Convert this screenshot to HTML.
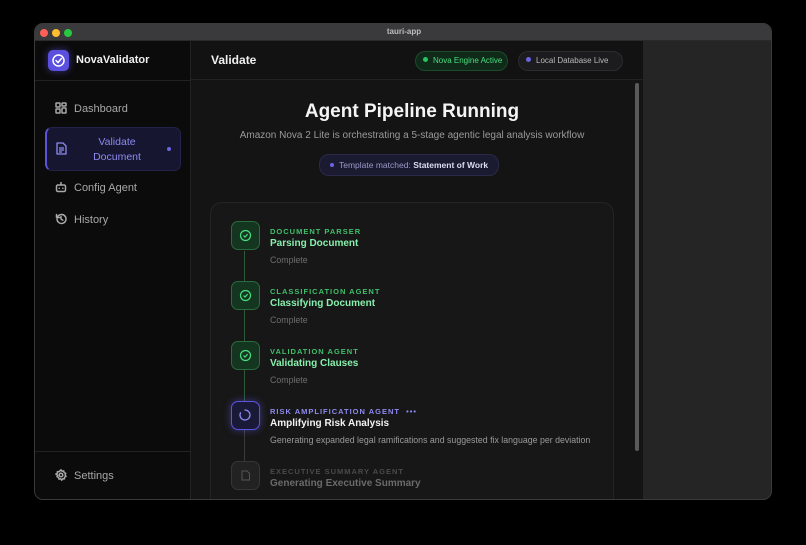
<!DOCTYPE html>
<html><head><meta charset="utf-8"><style>
*{margin:0;padding:0;box-sizing:border-box}
body{width:806px;height:545px;background:#000;font-family:"Liberation Sans",sans-serif;position:relative;overflow:hidden}
.a{position:absolute}
.win{left:34px;top:23px;width:738px;height:477px;border-radius:9px;overflow:hidden;background:#252525;border:1px solid #3a3a3a}
.tb{left:0;top:0;width:738px;height:17px;background:#3a3a3c;border-bottom:1px solid #2a2a2a}
.dot{width:8px;height:8px;border-radius:50%;top:5px}
.side{left:0;top:17px;width:156px;height:460px;background:#0b0b0b;border-right:1px solid #222}
.main{left:156px;top:17px;width:452px;height:460px;background:#141414}
.nav{left:21px;font-size:11px;color:#a8a8a8}
.ic{stroke:#a8a8a8;fill:none;stroke-width:1.5;stroke-linecap:round;stroke-linejoin:round}
.pill{height:20px;border-radius:10px;font-size:8px;line-height:18px;padding:0 6px 0 7px;white-space:nowrap}
.st{left:0}
.box{width:29px;height:29px;border-radius:7px}
.lab{font-size:7.5px;font-weight:bold;letter-spacing:1px}
.tt{font-size:10px;font-weight:bold}
.sub{font-size:8.8px;color:#6e6e6e}
</style></head><body>
<div class="a win">
 <div class="a tb">
  <div class="a dot" style="left:5px;background:#fe5f57"></div>
  <div class="a dot" style="left:17px;background:#febc2e"></div>
  <div class="a dot" style="left:29px;background:#28c840"></div>
  <div class="a" style="left:0;width:738px;text-align:center;top:3px;font-size:8px;color:#bdbdbd;font-weight:bold">tauri-app</div>
 </div>
 <div class="a side">
  <div class="a" style="left:13px;top:9px;width:21px;height:21px;border-radius:5px;background:#5b4fe0;box-shadow:0 0 8px rgba(100,90,240,.5)">
   <svg width="21" height="21" viewBox="0 0 21 21"><circle cx="10.5" cy="10.5" r="5.5" fill="none" stroke="#fff" stroke-width="1.5"/><path d="M8 10.5l2 2 3.5-4" fill="none" stroke="#fff" stroke-width="1.5" stroke-linecap="round"/></svg>
  </div>
  <div class="a" style="left:41px;top:13px;font-size:11px;color:#f0f0f0;font-weight:bold">NovaValidator</div>
  <div class="a" style="left:0;top:39px;width:156px;height:1px;background:#222"></div>
  <svg class="a" style="left:20px;top:61px" width="12" height="12" viewBox="0 0 12 12"><g class="ic" stroke-width="1.2"><rect x="1" y="1" width="4" height="4" rx=".5"/><rect x="7" y="1" width="4" height="3" rx=".5"/><rect x="1" y="7" width="4" height="4" rx=".5"/><rect x="7" y="6" width="4" height="5" rx=".5"/></g></svg>
  <div class="a nav" style="left:39px;top:62px">Dashboard</div>
  <div class="a" style="left:10px;top:86px;width:136px;height:44px;border-radius:7px;background:#161630;border:1px solid #22224a;border-left:2px solid #5a54d8"></div>
  <svg class="a" style="left:21px;top:101px" width="11" height="13" viewBox="0 0 11 13"><g stroke="#8e8af0" fill="none" stroke-width="1.3" stroke-linejoin="round"><path d="M1 1h6l3 3v8H1z"/><path d="M3 6h5M3 8h5M3 10h3"/></g></svg>
  <div class="a" style="left:44px;top:94px;width:76px;text-align:center;font-size:10.5px;color:#8e8af0;line-height:15px">Validate<br>Document</div>
  <div class="a" style="left:132px;top:106px;width:4px;height:4px;border-radius:50%;background:#6a64e0"></div>
  <svg class="a" style="left:20px;top:140px" width="12" height="12" viewBox="0 0 12 12"><g class="ic" stroke-width="1.2"><rect x="1.5" y="4" width="9" height="6.5" rx="1.5"/><path d="M6 1.5v2.5M4.2 7.2h.1M7.8 7.2h.1"/></g></svg>
  <div class="a nav" style="left:39px;top:141px">Config Agent</div>
  <svg class="a" style="left:20px;top:172px" width="12" height="12" viewBox="0 0 12 12"><g class="ic" stroke-width="1.2"><path d="M2 6a4.5 4.5 0 1 0 1.3-3.2L1.5 4.5M1.5 1.5v3h3M6 3.5V6l1.8 1.2"/></g></svg>
  <div class="a nav" style="left:39px;top:173px">History</div>
  <div class="a" style="left:0;top:410px;width:156px;height:1px;background:#222"></div>
  <svg class="a" style="left:20px;top:428px" width="12" height="12" viewBox="0 0 12 12"><g class="ic" stroke-width="1.1"><circle cx="6" cy="6" r="1.8"/><path d="M6 .8l1 1.4 1.7-.3.4 1.7 1.6.7-.6 1.6.9 1.5-1.5.8-.1 1.7-1.7-.1-1 1.4-1-1.4-1.7.3-.4-1.7-1.6-.7.6-1.6L.8 5.1l1.5-.8.1-1.7 1.7.1z"/></g></svg>
  <div class="a nav" style="left:39px;top:429px">Settings</div>
 </div>
 <div class="a main">
  <div class="a" style="left:0;top:0;width:452px;height:39px;background:#121212;border-bottom:1px solid #222"></div>
  <div class="a" style="left:20px;top:12px;font-size:12px;font-weight:bold;color:#f0f0f0">Validate</div>
  <div class="a pill" style="left:224px;top:10px;width:93px;background:#0f2a18;border:1px solid #1d4a2a;color:#4ade80"><span style="display:inline-block;width:5px;height:5px;border-radius:50%;background:#22c55e;margin-right:5px;vertical-align:1px"></span>Nova Engine Active</div>
  <div class="a pill" style="left:327px;top:10px;width:105px;background:#1c1c1e;border:1px solid #2c2c2e;color:#b8b8b8"><span style="display:inline-block;width:5px;height:5px;border-radius:50%;background:#6a64e0;margin-right:5px;vertical-align:1px"></span>Local Database Live</div>
  <div class="a" style="left:444px;top:42px;width:4px;height:368px;border-radius:2px;background:#5a5a5a"></div>
  <div class="a" style="left:0;top:60px;width:442px;text-align:center;font-size:19px;font-weight:bold;color:#f4f4f4">Agent Pipeline Running</div>
  <div class="a" style="left:0;top:89px;width:442px;text-align:center;font-size:10px;color:#9a9a9a">Amazon Nova 2 Lite is orchestrating a 5-stage agentic legal analysis workflow</div>
  <div class="a pill" style="left:128px;top:113px;height:22px;line-height:20px;padding:0 10px;background:#1a1a30;border:1px solid #2a2a48;color:#9a9ac8;font-size:8.5px"><span style="display:inline-block;width:4px;height:4px;border-radius:50%;background:#6a64e0;margin-right:5px;vertical-align:1px"></span>Template matched: <b style="color:#dcdcf0">Statement of Work</b></div>
  <div class="a" style="left:19px;top:161px;width:404px;height:320px;border-radius:12px;background:#171717;border:1px solid #242424"></div>
  <div class="a" style="left:53px;top:210px;width:1px;height:230px;background:#2e5a3a"></div>
  <div class="a" style="left:53px;top:390px;width:1px;height:50px;background:#3a3a3a"></div>
  <div class="a st" style="top:180px;left:40px">
   <div class="a box" style="background:#14351f;border:1px solid #2a6a3c"><svg width="27" height="27" viewBox="0 0 27 27"><circle cx="13.5" cy="13.5" r="5" fill="none" stroke="#4ade80" stroke-width="1.2"/><path d="M11.5 13.6l1.5 1.4 2.6-2.8" fill="none" stroke="#4ade80" stroke-width="1.2"/></svg></div>
   <div class="a lab" style="left:39px;top:6px;color:#3fbf6a;white-space:nowrap">DOCUMENT PARSER</div>
   <div class="a tt" style="left:39px;top:17px;color:#86efac;white-space:nowrap">Parsing Document</div>
   <div class="a sub" style="left:39px;top:34px;white-space:nowrap">Complete</div>
  </div>
  <div class="a st" style="top:240px;left:40px">
   <div class="a box" style="background:#14351f;border:1px solid #2a6a3c"><svg width="27" height="27" viewBox="0 0 27 27"><circle cx="13.5" cy="13.5" r="5" fill="none" stroke="#4ade80" stroke-width="1.2"/><path d="M11.5 13.6l1.5 1.4 2.6-2.8" fill="none" stroke="#4ade80" stroke-width="1.2"/></svg></div>
   <div class="a lab" style="left:39px;top:6px;color:#3fbf6a;white-space:nowrap">CLASSIFICATION AGENT</div>
   <div class="a tt" style="left:39px;top:17px;color:#86efac;white-space:nowrap">Classifying Document</div>
   <div class="a sub" style="left:39px;top:34px;white-space:nowrap">Complete</div>
  </div>
  <div class="a st" style="top:300px;left:40px">
   <div class="a box" style="background:#14351f;border:1px solid #2a6a3c"><svg width="27" height="27" viewBox="0 0 27 27"><circle cx="13.5" cy="13.5" r="5" fill="none" stroke="#4ade80" stroke-width="1.2"/><path d="M11.5 13.6l1.5 1.4 2.6-2.8" fill="none" stroke="#4ade80" stroke-width="1.2"/></svg></div>
   <div class="a lab" style="left:39px;top:6px;color:#3fbf6a;white-space:nowrap">VALIDATION AGENT</div>
   <div class="a tt" style="left:39px;top:17px;color:#86efac;white-space:nowrap">Validating Clauses</div>
   <div class="a sub" style="left:39px;top:34px;white-space:nowrap">Complete</div>
  </div>
  <div class="a st" style="top:360px;left:40px">
   <div class="a box" style="background:#1a1a38;border:1.5px solid #5a54e0;box-shadow:0 0 8px rgba(100,90,240,.5)"><svg width="26" height="26" viewBox="0 0 26 26"><path d="M13 8a5 5 0 1 1-4.5 2.8" fill="none" stroke="#8e8af0" stroke-width="1.3" stroke-linecap="round"/></svg></div>
   <div class="a lab" style="left:39px;top:6px;color:#8e8af0;white-space:nowrap">RISK AMPLIFICATION AGENT &nbsp;•••</div>
   <div class="a tt" style="left:39px;top:17px;color:#f2f2f2;white-space:nowrap">Amplifying Risk Analysis</div>
   <div class="a sub" style="left:39px;top:34px;color:#9a9a9a;white-space:nowrap">Generating expanded legal ramifications and suggested fix language per deviation</div>
  </div>
  <div class="a st" style="top:420px;left:40px">
   <div class="a box" style="background:#222;border:1px solid #363636"><svg width="27" height="27" viewBox="0 0 27 27"><path d="M10 9h5l2.5 2.5V18h-7.5z" fill="none" stroke="#555" stroke-width="1"/></svg></div>
   <div class="a lab" style="left:39px;top:6px;color:#4a4a4a;white-space:nowrap">EXECUTIVE SUMMARY AGENT</div>
   <div class="a tt" style="left:39px;top:17px;color:#6a6a6a;white-space:nowrap">Generating Executive Summary</div>
  </div>
 </div>
</div>
</body></html>
